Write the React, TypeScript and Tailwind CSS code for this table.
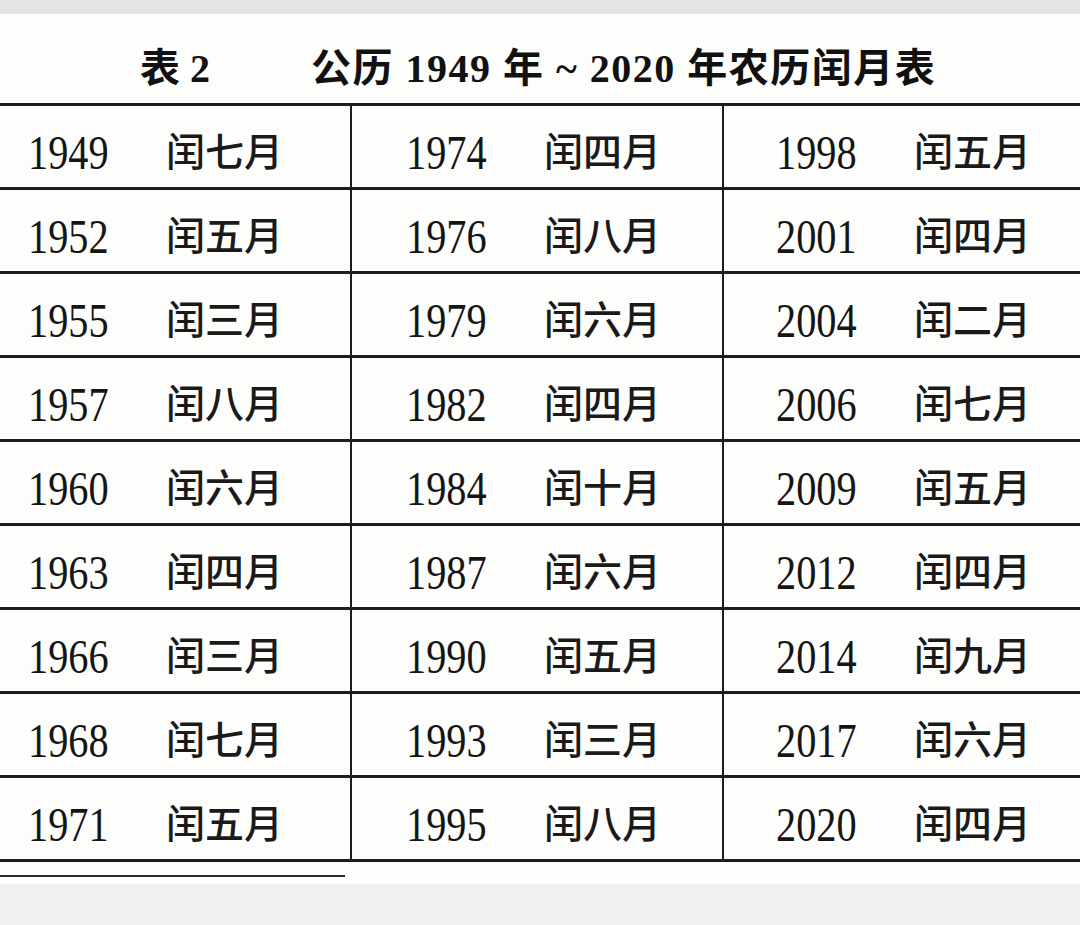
const ROWS: [string, string][][] = [
  [["1949", "闰七月"], ["1974", "闰四月"], ["1998", "闰五月"]],
  [["1952", "闰五月"], ["1976", "闰八月"], ["2001", "闰四月"]],
  [["1955", "闰三月"], ["1979", "闰六月"], ["2004", "闰二月"]],
  [["1957", "闰八月"], ["1982", "闰四月"], ["2006", "闰七月"]],
  [["1960", "闰六月"], ["1984", "闰十月"], ["2009", "闰五月"]],
  [["1963", "闰四月"], ["1987", "闰六月"], ["2012", "闰四月"]],
  [["1966", "闰三月"], ["1990", "闰五月"], ["2014", "闰九月"]],
  [["1968", "闰七月"], ["1993", "闰三月"], ["2017", "闰六月"]],
  [["1971", "闰五月"], ["1995", "闰八月"], ["2020", "闰四月"]],
];

const serif = "font-['Liberation_Serif','Noto_Sans_CJK_SC',serif]";

function Cell({ year, month, col }: { year: string; month: string; col: number }) {
  const pad = col === 0 ? "pl-[28px]" : col === 1 ? "pl-[54px] border-l-2" : "pl-[52px] border-l-2";
  return (
    <div className={`flex items-center border-[#1c1c1c] pt-3 ${pad}`}>
      <span className="w-[138px]">
        <span className="inline-block origin-left scale-x-[0.84] text-[48px] leading-none text-[#151515]">
          {year}
        </span>
      </span>
      <span className="text-[39px] leading-none font-medium text-[#1a1a1a]">{month}</span>
    </div>
  );
}

export default function App() {
  return (
    <div className={`flex h-[925px] w-[1080px] flex-col overflow-hidden bg-[#f0f0f2] ${serif}`}>
      <div className="h-[14px] bg-[#e4e4e7]" />
      <div className="flex h-[870px] flex-col bg-[#fdfdfc]">
        <div className="flex h-[89px] items-center pt-5 text-[40px] font-bold text-[#111]">
          <span className="ml-[140px]">表 2</span>
          <span className="ml-[101px] tracking-[1.5px]">公历 1949 年 ~ 2020 年农历闰月表</span>
        </div>
        <div className="border-t-[3px] border-[#1c1c1c]">
          {ROWS.map((row) => (
            <div
              key={row[0][0]}
              className="grid h-[84px] grid-cols-[350px_372px_1fr] border-b-[3px] border-[#1c1c1c]"
            >
              {row.map(([y, m], i) => (
                <Cell key={y} year={y} month={m} col={i} />
              ))}
            </div>
          ))}
        </div>
        <div className="mt-[13px] h-[2px] w-[345px] bg-[#2a2a2a]" />
      </div>
    </div>
  );
}
